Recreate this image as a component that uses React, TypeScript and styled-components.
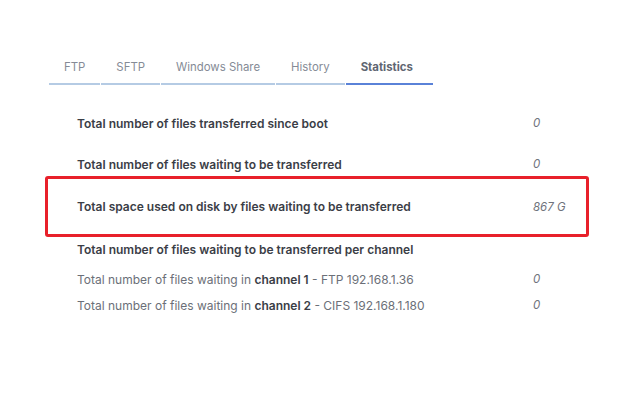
import React from "react";
import styled, { createGlobalStyle } from "styled-components";

const GlobalStyle = createGlobalStyle`
  body {
    margin: 0;
    background: #ffffff;
    font-family: Inter, "Noto Sans", sans-serif;
  }
`;

const Page = styled.div`
  width: 637px;
  height: 400px;
  padding: 55px 0 0 49px;
  box-sizing: border-box;
`;

const Tabs = styled.div`
  display: flex;
  gap: 1px;
  width: 384px;
`;

const Tab = styled.div<{ $active?: boolean }>`
  padding: 0 15px;
  height: 30px;
  line-height: 24px;
  box-sizing: border-box;
  font-size: 11.4px;
  font-weight: ${({ $active }) => ($active ? 700 : 400)};
  color: ${({ $active }) => ($active ? "#5f6672" : "#858b96")};
  border-bottom: 2px solid
    ${({ $active }) => ($active ? "#5a82d8" : "#b5cbe4")};
  white-space: nowrap;
  flex: ${({ $active }) => ($active ? 1 : "none")};
`;

const List = styled.div`
  display: flex;
  flex-direction: column;
  width: 544px;
  margin-left: -4px;
  margin-top: 26px;
`;

const Row = styled.div<{ $highlighted?: boolean; $spacing: number }>`
  display: grid;
  grid-template-columns: 456px 1fr;
  align-items: center;
  min-height: ${({ $highlighted }) => ($highlighted ? "61px" : "24px")};
  margin-top: ${({ $spacing }) => $spacing}px;
  padding-left: 29px;
  border: 3px solid ${({ $highlighted }) => ($highlighted ? "#e8202a" : "transparent")};
  border-radius: 3px;
  box-sizing: border-box;
`;

const Label = styled.div<{ $heading?: boolean }>`
  font-size: 12px;
  font-weight: ${({ $heading }) => ($heading ? 600 : 400)};
  color: ${({ $heading }) => ($heading ? "#3b3e47" : "#6b6f78")};
  white-space: nowrap;

  b {
    font-weight: 600;
    color: #3b3e47;
  }
`;

const Value = styled.div`
  font-size: 11.5px;
  font-style: italic;
  color: #6f737c;
`;

const tabs = ["FTP", "SFTP", "Windows Share", "History", "Statistics"];

export default function App() {
  return (
    <Page>
      <GlobalStyle />
      <Tabs>
        {tabs.map((t) => (
          <Tab key={t} $active={t === "Statistics"}>
            {t}
          </Tab>
        ))}
      </Tabs>
      <List>
        <Row $spacing={0}>
          <Label $heading>Total number of files transferred since boot</Label>
          <Value>0</Value>
        </Row>
        <Row $spacing={17}>
          <Label $heading>Total number of files waiting to be transferred</Label>
          <Value>0</Value>
        </Row>
        <Row $spacing={0} $highlighted>
          <Label $heading>Total space used on disk by files waiting to be transferred</Label>
          <Value>867 G</Value>
        </Row>
        <Row $spacing={0}>
          <Label $heading>Total number of files waiting to be transferred per channel</Label>
        </Row>
        <Row $spacing={6}>
          <Label>
            Total number of files waiting in <b>channel 1</b> - FTP 192.168.1.36
          </Label>
          <Value>0</Value>
        </Row>
        <Row $spacing={2}>
          <Label>
            Total number of files waiting in <b>channel 2</b> - CIFS 192.168.1.180
          </Label>
          <Value>0</Value>
        </Row>
      </List>
    </Page>
  );
}
